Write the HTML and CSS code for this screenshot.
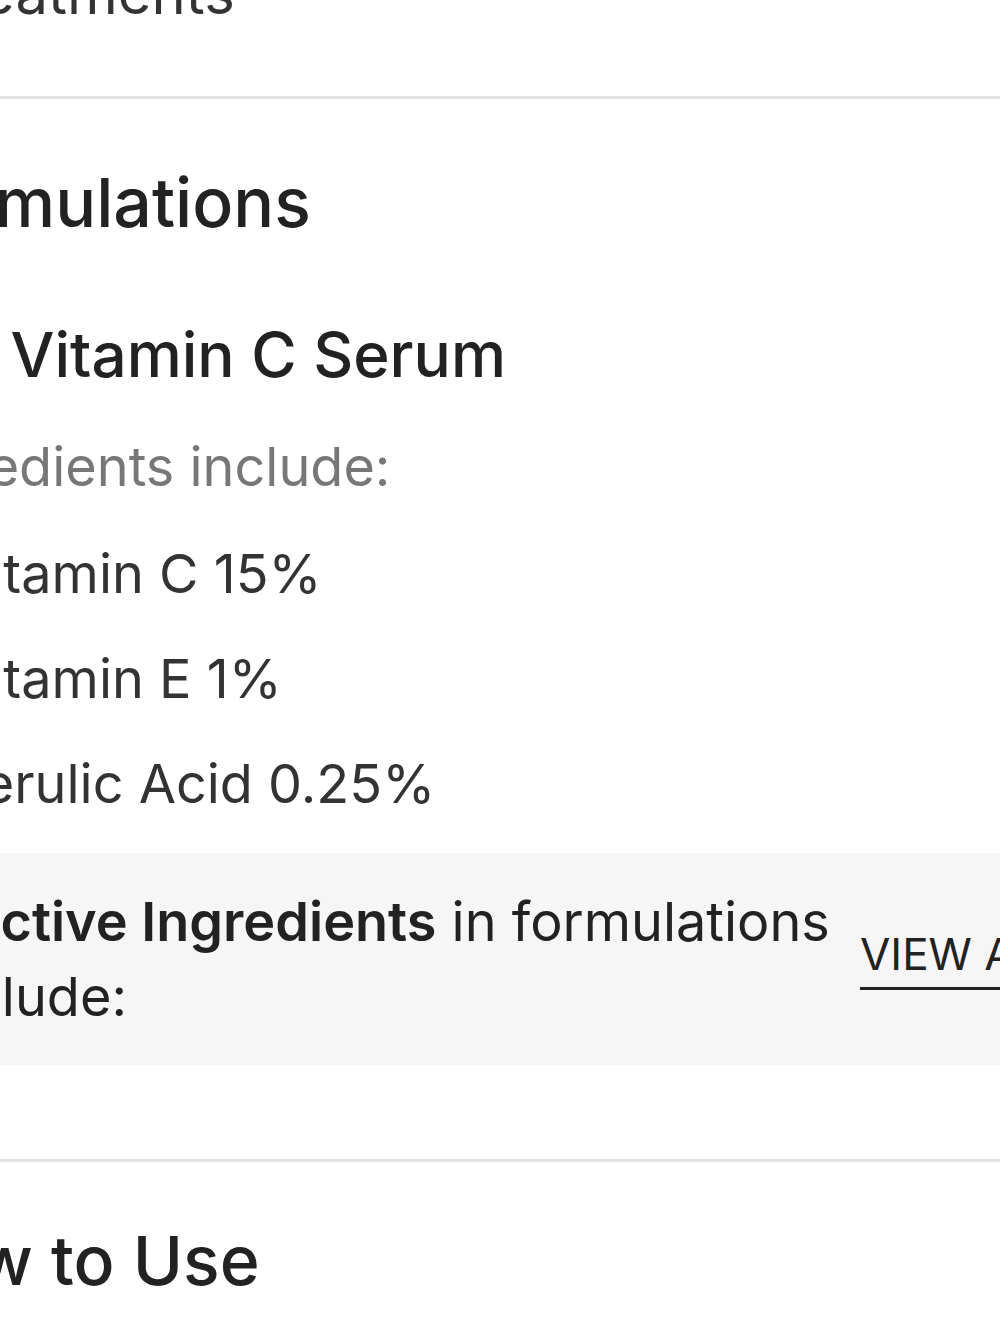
FILE: index.html
```html
<!DOCTYPE html>
<html lang="en">
<head>
    <meta charset="UTF-8">
    <meta name="viewport" content="width=device-width, initial-scale=1.0">
    <title>Formulations</title>
    <link rel="stylesheet" href="styles.css">
</head>
<body>
    <div class="page">
        <!-- Previous section (scrolled off) -->
        <div class="prev-title">Treatments</div>
        <div class="divider"></div>

        <!-- Formulations -->
        <div class="section">
            <h2 class="section-title">Formulations</h2>
            <h3 class="product-name"><span class="prefix">1.</span> Vitamin C Serum</h3>
            <p class="ingredients-label">Key ingredients include:</p>
            <ul class="ingredient-list">
                <li>Vitamin C 15%</li>
                <li>Vitamin E 1%</li>
                <li>Ferulic Acid 0.25%</li>
            </ul>
        </div>

        <div class="active-box">
            <p class="active-text"><strong>Active Ingredients</strong> in formulations include:</p>
            <a class="view-all" href="#">VIEW ALL</a>
        </div>

        <div class="divider second"></div>

        <!-- How to Use -->
        <div class="section">
            <h2 class="section-title use">How to Use</h2>
        </div>
    </div>
</body>
</html>
```

FILE: styles.css
```css
body {
    margin: 0;
    background-color: #ffffff;
    font-family: Inter, "Noto Sans", sans-serif;
    color: #222222;
    overflow: hidden;
}
.page {
    width: 1000px;
    height: 1333px;
    overflow: hidden;
}
.prev-title {
    font-size: 58px;
    line-height: 60px;
    margin-top: -37px;
    margin-left: -74px;
    color: #333333;
}
.divider {
    height: 3px;
    background-color: #e3e3e3;
    margin-top: 73px;
}
.divider.second {
    margin-top: 94px;
}
.section-title {
    margin: 69px 0 0 -111px;
    font-size: 68px;
    font-weight: 500;
    line-height: 68px;
    white-space: nowrap;
}
.section-title.use {
    margin-top: 64px;
    margin-left: -114px;
}
.product-name {
    margin: 88px 0 0 -50px;
    font-size: 62px;
    font-weight: 500;
    line-height: 62px;
    white-space: nowrap;
}
.ingredients-label {
    margin: 51px 0 0 -220px;
    font-size: 54px;
    line-height: 60px;
    color: #777777;
    white-space: nowrap;
}
.ingredient-list {
    list-style: none;
    margin: 24px 0 0 -47px;
    padding: 0;
}
.ingredient-list li {
    font-size: 54px;
    line-height: 105px;
    color: #333333;
    white-space: nowrap;
}
.active-box {
    display: flex;
    align-items: center;
    gap: 20px;
    height: 212px;
    margin-top: 17px;
    background-color: #f6f6f6;
}
.active-text {
    flex-shrink: 0;
    margin: 0 0 0 -74px;
    width: 914px;
    text-indent: 36px;
    font-size: 54px;
    line-height: 75px;
    color: #222222;
}
.active-text strong {
    font-weight: 600;
}
.view-all {
    flex-shrink: 0;
    font-size: 44px;
    line-height: 50px;
    color: #222222;
    text-decoration: none;
    border-bottom: 3px solid #222222;
    padding-bottom: 8px;
    white-space: nowrap;
}
```
